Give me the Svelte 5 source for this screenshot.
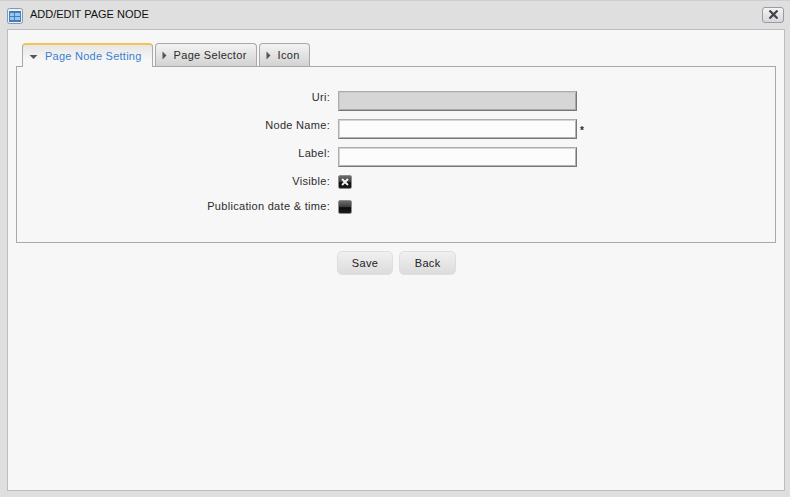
<script>
  const tabs = [
    { name: "Page Node Setting", active: true },
    { name: "Page Selector", active: false },
    { name: "Icon", active: false },
  ];
</script>

<div class="window">
  <header class="titlebar">
    <svg class="app-icon" width="16" height="16" viewBox="0 0 16 16">
      <rect x="0.5" y="0.5" width="15" height="15" rx="2" fill="#eef1f6" stroke="#8c95a3" />
      <rect x="2" y="3" width="12" height="11" fill="#3f7fc0" />
      <rect x="3" y="5" width="4" height="3" fill="#9cc6ea" />
      <rect x="3" y="9" width="4" height="3" fill="#9cc6ea" />
      <rect x="8" y="5" width="5" height="3" fill="#9cc6ea" />
      <rect x="8" y="9" width="5" height="3" fill="#9cc6ea" />
    </svg>
    <span class="title">ADD/EDIT PAGE NODE</span>
    <button class="close" aria-label="Close">
      <svg width="11" height="9" viewBox="0 0 11 9">
        <path d="M1.5 0.5 L9.5 8.5 M9.5 0.5 L1.5 8.5" stroke="#444" stroke-width="2.2" fill="none" />
      </svg>
    </button>
  </header>

  <main class="panel">
    <ul class="tabs">
      {#each tabs as tab}
        <li class="tab" class:active={tab.active}>
          <svg class="arrow" width="9" height="9" viewBox="0 0 9 9">
            {#if tab.active}
              <path d="M0.5 3 H8.5 L4.5 7 Z" fill="#555" />
            {:else}
              <path d="M2.5 0.5 L6.5 4.5 L2.5 8.5 Z" fill="#555" />
            {/if}
          </svg>
          <span>{tab.name}</span>
        </li>
      {/each}
    </ul>

    <section class="fieldset">
      <div class="form">
        <label for="uri">Uri:</label>
        <div class="field"><input id="uri" class="text disabled" disabled /></div>

        <label for="name">Node Name:</label>
        <div class="field"><input id="name" class="text" /><span class="req">*</span></div>

        <label for="lbl">Label:</label>
        <div class="field"><input id="lbl" class="text" /></div>

        <span class="lab">Visible:</span>
        <div class="field">
          <span class="check">
            <svg width="8" height="8" viewBox="0 0 8 8">
              <path d="M1 1 L7 7 M7 1 L1 7" stroke="#f2f2f2" stroke-width="2" fill="none" />
            </svg>
          </span>
        </div>

        <span class="lab">Publication date &amp; time:</span>
        <div class="field"><span class="check"></span></div>
      </div>
    </section>

    <div class="buttons">
      <button class="btn">Save</button>
      <button class="btn">Back</button>
    </div>
  </main>
</div>

<style>
  :global(body) {
    margin: 0;
    background: #dfdfdf;
  }

  .window {
    box-sizing: border-box;
    width: 790px;
    height: 497px;
    padding: 0 5px 6px 7px;
    border-top: 1px solid #cfcfcf;
    background: #dfdfdf;
    display: flex;
    flex-direction: column;
    font-family: "Liberation Sans", Arial, sans-serif;
    font-size: 11px;
    letter-spacing: 0.3px;
    color: #2c2c2c;
  }

  /* title bar */
  .titlebar {
    height: 28px;
    flex: none;
    display: flex;
    align-items: center;
  }

  .app-icon {
    margin-right: 7px;
    margin-top: 1px;
  }

  .title {
    flex: 1;
    letter-spacing: 0;
    color: #111;
    margin-top: -3px;
  }

  .close {
    width: 22px;
    height: 16px;
    padding: 0;
    margin: -1px 1px 0 0;
    border: 1px solid #9a9aa4;
    border-radius: 3px;
    background: linear-gradient(#f4f4f6, #d6d6dc);
    display: flex;
    align-items: center;
    justify-content: center;
  }

  /* main panel */
  .panel {
    flex: 1;
    box-sizing: border-box;
    border: 1px solid #bdbdbd;
    background: #f7f7f7;
    padding: 13px 8px 0 8px;
  }

  .tabs {
    list-style: none;
    margin: 0;
    padding: 0 0 0 6px;
    display: flex;
    gap: 2px;
    height: 24px;
    position: relative;
    z-index: 1;
  }

  .tab {
    box-sizing: border-box;
    height: 23px;
    padding: 0 9px 0 4px;
    border: 1px solid #a9a9a9;
    border-bottom: none;
    border-radius: 4px 4px 0 0;
    background: linear-gradient(#f3f3f3, #d2d2d2);
    display: flex;
    align-items: center;
    gap: 5px;
  }

  .tab.active {
    height: 24px;
    padding: 0 10px 0 6px;
    border-top: 2px solid #f2c34e;
    background: linear-gradient(#e6e6e6, #f7f7f7 70%);
    color: #3a80cf;
    gap: 7px;
    letter-spacing: 0.25px;
  }

  .arrow {
    flex: none;
  }

  .fieldset {
    box-sizing: border-box;
    height: 177px;
    margin-top: -1px;
    border: 1px solid #a9a9a9;
    padding-top: 24px;
  }

  .form {
    display: grid;
    grid-template-columns: 313px 1fr;
    grid-template-rows: 28px 28px 28px 25px 25px;
    column-gap: 8px;
  }

  .form label,
  .lab {
    text-align: right;
    line-height: 13px;
  }

  .field {
    display: flex;
    align-items: flex-start;
  }

  .text {
    box-sizing: border-box;
    width: 239px;
    height: 20px;
    padding: 0;
    border: 1px solid;
    border-color: #adadad #777 #777 #adadad;
    box-shadow: inset 1px 1px #d4d4d4, inset -1px -1px #b4b4b4;
    background: #fcfcfc;
    outline: none;
  }

  .text.disabled {
    background: #d6d6d6;
    box-shadow: inset 1px 1px #c8c8c8, inset -1px -1px #a8a8a8;
  }

  .req {
    margin: 2px 0 0 3px;
    font-weight: bold;
    font-size: 10px;
    line-height: 19px;
  }

  .check {
    width: 14px;
    height: 14px;
    border: 1px solid #8c8c8c;
    border-radius: 2px;
    background: linear-gradient(#6a6a6a, #3c3c3c 50%, #0c0c0c 55%, #1c1c1c);
    display: flex;
    align-items: center;
    justify-content: center;
    box-sizing: border-box;
  }

  /* buttons */
  .buttons {
    display: flex;
    justify-content: center;
    gap: 6px;
    margin-top: 8px;
    margin-left: 1px;
  }

  .btn {
    box-sizing: border-box;
    height: 24px;
    min-width: 56px;
    padding: 0 14px;
    border: 1px solid #dedede;
    border-radius: 5px;
    background: linear-gradient(#f0f0f0, #dcdcdc);
    font: inherit;
    letter-spacing: inherit;
    color: #222;
  }

  .btn:last-child {
    min-width: 57px;
  }
</style>
